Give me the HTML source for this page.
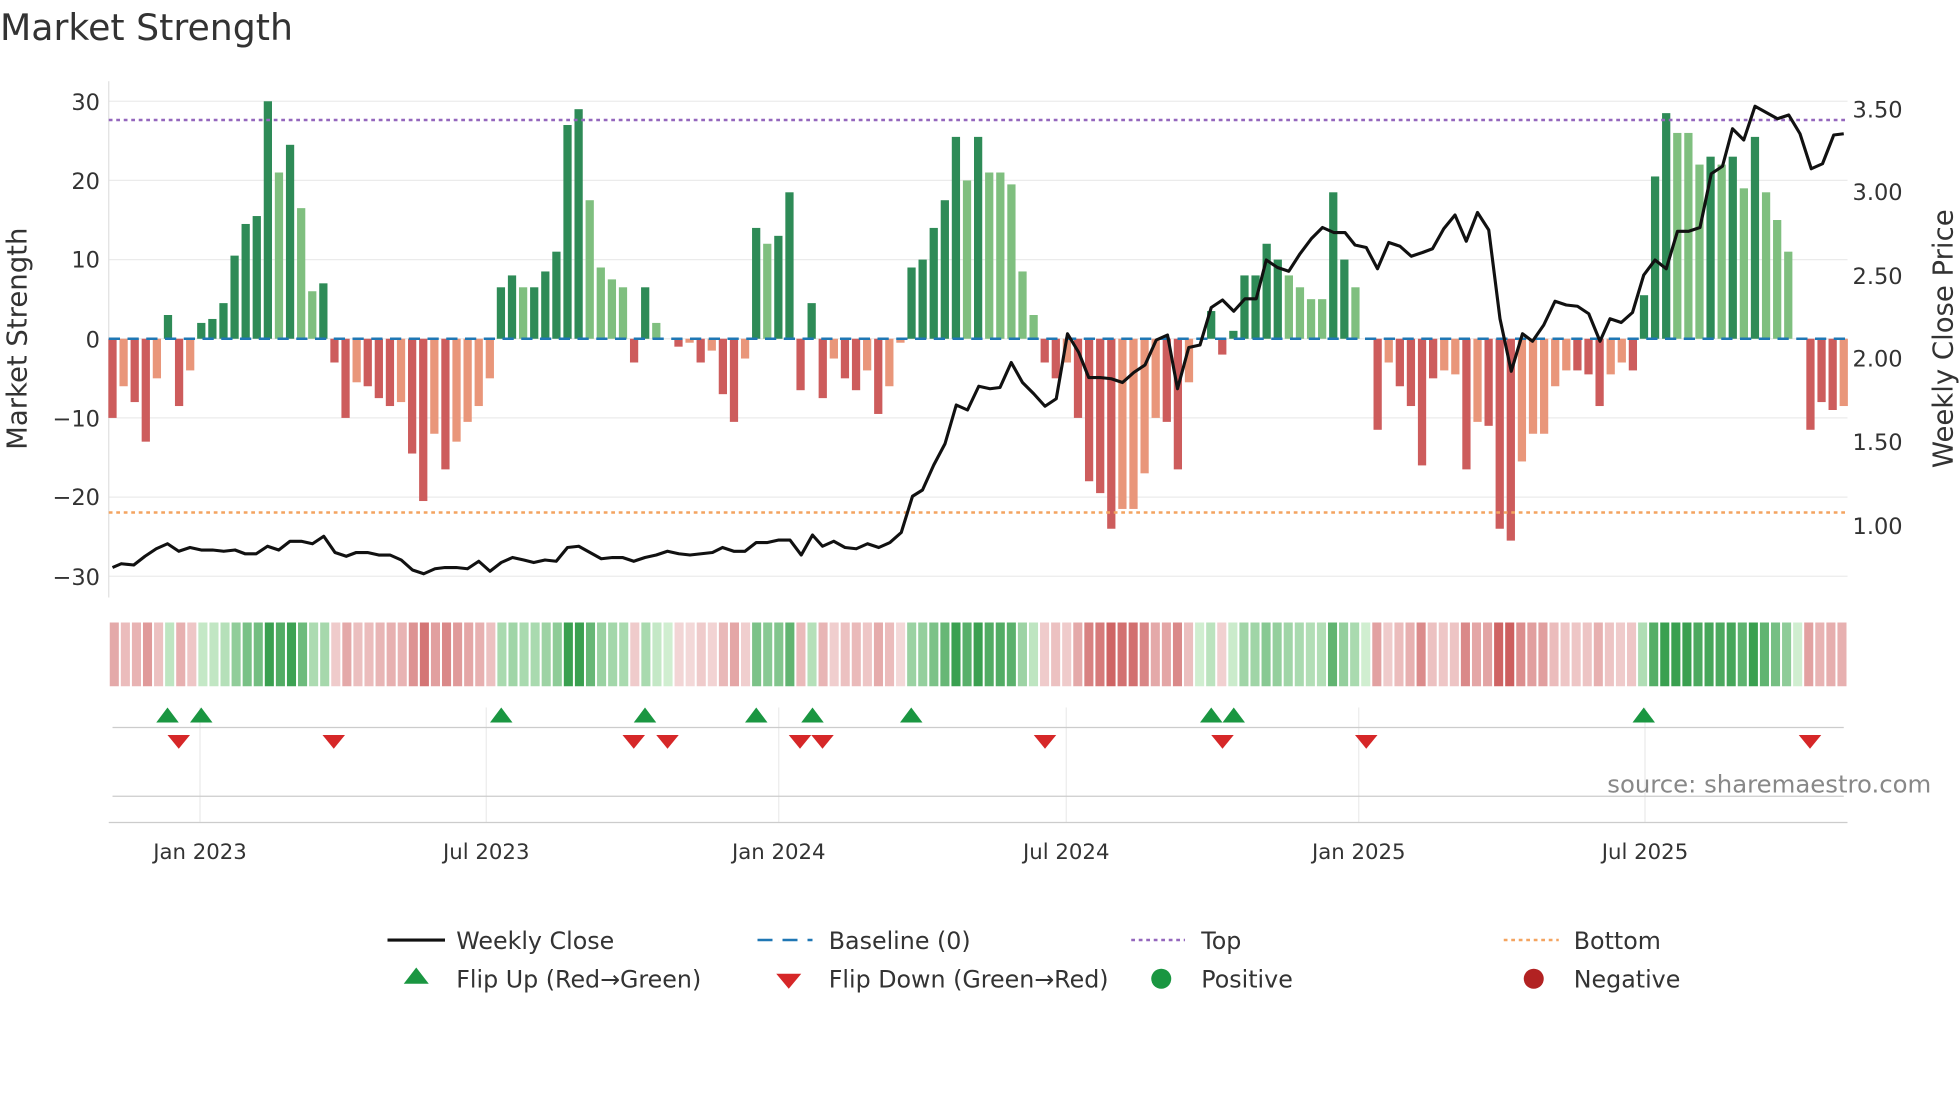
<!DOCTYPE html>
<html><head><meta charset="utf-8"><style>
html,body{margin:0;padding:0;background:#fff;width:1960px;height:1102px;overflow:hidden}
svg{display:block;font-family:"DejaVu Sans","Liberation Sans",sans-serif}
</style></head><body>
<svg id="s" width="1960" height="1102" viewBox="0 0 1568 881.6" xmlns="http://www.w3.org/2000/svg">
<text x="0" y="32" font-size="29" fill="#333">Market Strength</text>
<g stroke="#ebebeb" stroke-width="1">
<line x1="87" x2="1478" y1="81" y2="81"/><line x1="87" x2="1478" y1="144.3" y2="144.3"/><line x1="87" x2="1478" y1="207.7" y2="207.7"/><line x1="87" x2="1478" y1="271" y2="271"/><line x1="87" x2="1478" y1="334.3" y2="334.3"/><line x1="87" x2="1478" y1="397.7" y2="397.7"/><line x1="87" x2="1478" y1="461" y2="461"/>
<line x1="160" x2="160" y1="566" y2="658"/><line x1="389" x2="389" y1="566" y2="658"/><line x1="623" x2="623" y1="566" y2="658"/><line x1="853" x2="853" y1="566" y2="658"/><line x1="1087" x2="1087" y1="566" y2="658"/><line x1="1316" x2="1316" y1="566" y2="658"/>
</g>
<line x1="87" x2="87" y1="65" y2="478" stroke="#e0e0e0"/>
<line x1="90" x2="1475" y1="582" y2="582" stroke="#ccc"/>
<line x1="90" x2="1475" y1="637" y2="637" stroke="#ccc"/>
<line x1="87" x2="1478" y1="658" y2="658" stroke="#ccc"/>
<g id="bars"></g>
<g id="heat"></g>
<line x1="87" x2="1478" y1="271" y2="271" stroke="#1f77b4" stroke-width="2" stroke-dasharray="9 6"/>
<line x1="87" x2="1478" y1="96" y2="96" stroke="#9467bd" stroke-width="2" stroke-dasharray="3 3"/>
<line x1="87" x2="1478" y1="410" y2="410" stroke="#f4a460" stroke-width="2" stroke-dasharray="3 3"/>
<polyline id="price" fill="none" stroke="#111" stroke-width="2.5" stroke-linejoin="round"/>
<g id="mk"></g>
<g font-size="18" fill="#333" text-anchor="end">
<text x="80" y="88">30</text><text x="80" y="151">20</text><text x="80" y="214">10</text><text x="80" y="278">0</text><text x="80" y="341">−10</text><text x="80" y="404">−20</text><text x="80" y="468">−30</text>
</g>
<g font-size="18" fill="#333">
<text x="1482" y="94">3.50</text><text x="1482" y="160">3.00</text><text x="1482" y="227">2.50</text><text x="1482" y="293">2.00</text><text x="1482" y="360">1.50</text><text x="1482" y="427">1.00</text>
</g>
<text transform="translate(21,271) rotate(-90)" font-size="22" fill="#333" text-anchor="middle">Market Strength</text>
<text transform="translate(1562,271) rotate(-90)" font-size="22" fill="#333" text-anchor="middle">Weekly Close Price</text>
<text x="1545" y="634" font-size="19.5" fill="#888" text-anchor="end">source: sharemaestro.com</text>
<g font-size="17" fill="#333" text-anchor="middle">
<text x="160" y="687">Jan 2023</text><text x="389" y="687">Jul 2023</text><text x="623" y="687">Jan 2024</text><text x="853" y="687">Jul 2024</text><text x="1087" y="687">Jan 2025</text><text x="1316" y="687">Jul 2025</text>
</g>
<g font-size="19" fill="#333">
<line x1="310" x2="356" y1="752" y2="752" stroke="#111" stroke-width="2.5"/><text x="365" y="759">Weekly Close</text>
<line x1="606" x2="650" y1="752" y2="752" stroke="#1f77b4" stroke-width="2" stroke-dasharray="12 8"/><text x="663" y="759">Baseline (0)</text>
<line x1="905" x2="948" y1="752" y2="752" stroke="#9467bd" stroke-width="2" stroke-dasharray="3 3"/><text x="961" y="759">Top</text>
<line x1="1203" x2="1247" y1="752" y2="752" stroke="#f4a460" stroke-width="2" stroke-dasharray="3 3"/><text x="1259" y="759">Bottom</text>
<polygon points="333,774 343,787 323,787" fill="#1a9641"/><text x="365" y="790">Flip Up (Red→Green)</text>
<polygon points="621,779 641,779 631,791" fill="#d62728"/><text x="663" y="790">Flip Down (Green→Red)</text>
<circle cx="929" cy="783" r="8" fill="#1a9641"/><text x="961" y="790">Positive</text>
<circle cx="1227" cy="783" r="8" fill="#b22222"/><text x="1259" y="790">Negative</text>
</g>
</svg>
<script>
var raw="-10,-6L,-8,-13,-5L,3,-8.5,-4L,2,2.5,4.5,10.5,14.5,15.5,30,21L,24.5,16.5L,6L,7,-3,-10,-5.5L,-6,-7.5,-8.5,-8L,-14.5,-20.5,-12L,-16.5,-13L,-10.5L,-8.5L,-5L,6.5,8,6.5L,6.5,8.5,11,27,29,17.5L,9L,7.5L,6.5L,-3,6.5,2L,0,-1,-0.5L,-3,-1.5L,-7,-10.5,-2.5L,14,12L,13,18.5,-6.5,4.5,-7.5,-2.5L,-5,-6.5,-4L,-9.5,-6L,-0.5L,9,10,14,17.5,25.5,20L,25.5,21L,21L,19.5L,8.5L,3L,-3,-5,-3L,-10,-18,-19.5,-24,-21.5L,-21.5L,-17L,-10L,-10.5,-16.5,-5.5L,0,3.5,-2,1,8,8,12,10,8L,6.5L,5L,5L,18.5,10,6.5L,0,-11.5,-3L,-6,-8.5,-16,-5,-4L,-4.5L,-16.5,-10.5L,-11,-24,-25.5,-15.5L,-12L,-12L,-6L,-4L,-4,-4.5,-8.5,-4.5L,-3L,-4,5.5,20.5,28.5,26L,26L,22L,23,22L,23,19L,25.5,18.5L,15L,11L,0,-11.5,-8,-9,-8.5L".split(',');
var NS="http://www.w3.org/2000/svg",bars=document.getElementById('bars'),heat=document.getElementById('heat');
function el(p,t,a){var e=document.createElementNS(NS,t);for(var k in a)e.setAttribute(k,a[k]);p.appendChild(e);return e}
var n=raw.length,step=(1475-90)/(n-1);
function mix(a,b,t){return 'rgb('+a.map(function(x,i){return Math.round(x+(b[i]-x)*t)}).join(',')+')'}
for(var i=0;i<n;i++){var lt=raw[i].indexOf('L')>=0,val=parseFloat(raw[i]);var x=90+i*step,h=Math.abs(val)*6.333;
 if(val!==0){var c=val>0?(lt?'#7fbf7f':'#2e8b57'):(lt?'#e9967a':'#cd5c5c');
 el(bars,'rect',{x:x-3.3,y:val>0?271-h:271,width:6.6,height:h,fill:c});}
 var t=Math.min(1,Math.abs(val)/25);
 var hc=val>=0?mix([208,238,208],[58,160,80],t):mix([244,218,218],[205,95,95],t);
 el(heat,'rect',{x:87+i*(1391/n)+0.8,y:498,width:1391/n-1.6,height:51,fill:hc});}
var pts="90,454 97,451 107,452 116,445 125,439 134,435 143,441 152,438 161,440 170,440 179,441 188,440 196,443 205,443 214,437 223,440 232,433 241,433 250,435 259,429 268,442 277,445 285,442 294,442 303,444 312,444 321,448 330,456 339,459 348,455 356,454 365,454 374,455 383,449 392,457 401,450 410,446 419,448 427,450 436,448 445,449 454,438 463,437 472,442 481,447 490,446 498,446 507,449 516,446 525,444 534,441 543,443 552,444 561,443 570,442 578,438 587,441 596,441 605,434 614,434 623,432 632,432 641,444 650,428 658,437 667,433 676,438 685,439 694,435 703,438 712,434 721,426 730,397 738,392 747,372 756,355 765,324 774,328 783,309 792,311 800,310 809,290 818,306 827,315 836,325 845,319 854,267 863,282 871,302 880,302 889,303 898,306 907,298 916,292 925,272 934,268 942,311 951,278 960,276 969,246 978,240 987,249 996,239 1005,239 1013,208 1022,214 1031,217 1040,203 1049,191 1058,182 1067,186 1076,186 1084,196 1093,198 1102,215 1111,194 1120,197 1129,205 1138,202 1146,199 1155,183 1164,172 1173,193 1182,170 1191,184 1200,255 1209,297 1218,267 1226,273 1235,260 1244,241 1253,244 1262,245 1271,251 1280,273 1288,255 1297,258 1306,250 1315,220 1324,208 1333,215 1342,185 1351,185 1360,182 1369,139 1378,133 1386,103 1395,112 1404,85 1413,90 1422,95 1431,92 1440,107 1449,135 1458,131 1467,108 1475,107";
document.getElementById('price').setAttribute('points',pts);
var mk=document.getElementById('mk');
[134,161,401,516,605,650,729,969,987,1315].forEach(function(x){el(mk,'polygon',{points:x+',566 '+(x+9)+',578 '+(x-9)+',578',fill:'#1a9641'})});
[143,267,507,534,640,658,836,978,1093,1448].forEach(function(x){el(mk,'polygon',{points:(x-9)+',588 '+(x+9)+',588 '+x+',599',fill:'#d62728'})});
</script>
</body></html>
